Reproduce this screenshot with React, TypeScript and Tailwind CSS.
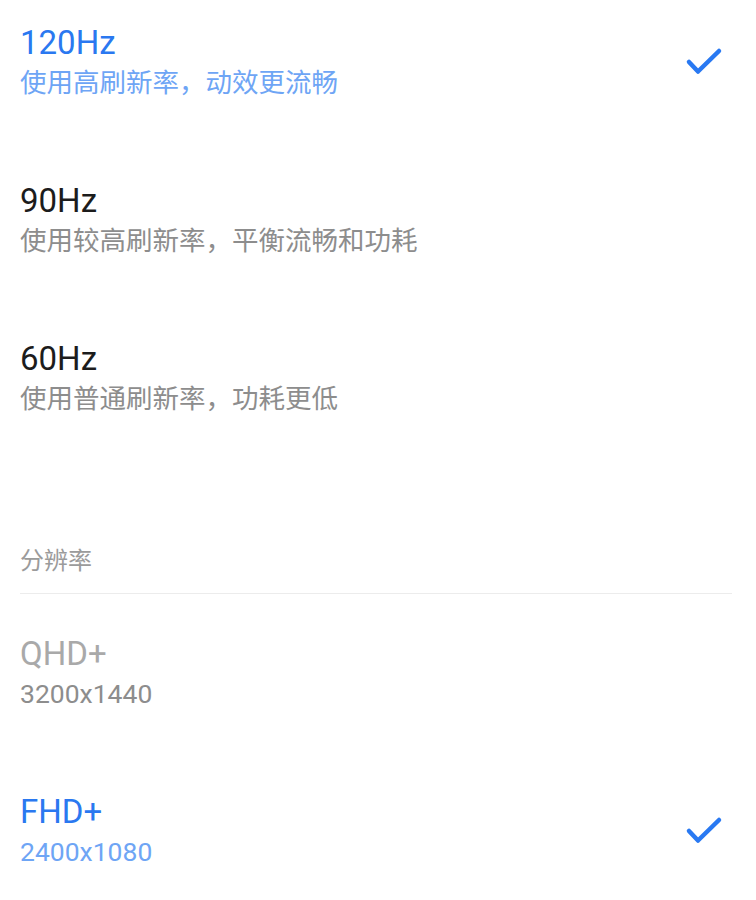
import React from 'react';

type Option = {
  title: string;
  desc: string;
  selected?: boolean;
  disabled?: boolean;
};

const refreshRates: Option[] = [
  { title: '120Hz', desc: '使用高刷新率，动效更流畅', selected: true },
  { title: '90Hz', desc: '使用较高刷新率，平衡流畅和功耗' },
  { title: '60Hz', desc: '使用普通刷新率，功耗更低' },
];

const resolutions: Option[] = [
  { title: 'QHD+', desc: '3200x1440', disabled: true },
  { title: 'FHD+', desc: '2400x1080', selected: true },
];

const CheckMark = () => (
  <svg width="40" height="31" viewBox="0 0 40 31" fill="none">
    <path
      d="M5 16 L14 25.5 L35 5"
      stroke="#2979f2"
      strokeWidth="4.5"
      strokeLinecap="round"
      strokeLinejoin="round"
    />
  </svg>
);

const Row = ({ opt, className }: { opt: Option; className: string }) => {
  const titleColor = opt.selected
    ? 'text-[#2a78f0]'
    : opt.disabled
    ? 'text-[#a9a9a9]'
    : 'text-[#1c1c1c]';
  const descColor = opt.selected ? 'text-[#6ea5f5]' : 'text-[#8d8d8d]';
  return (
    <div className={`flex items-center justify-between pl-5 pr-8 ${className}`}>
      <div>
        <div className={`text-[33px] leading-[40px] ${titleColor}`}>{opt.title}</div>
        <div className={`text-[26.5px] leading-[40px] ${descColor}`}>{opt.desc}</div>
      </div>
      {opt.selected && (
        <div className="-mt-1">
          <CheckMark />
        </div>
      )}
    </div>
  );
};

export default function App() {
  return (
    <div
      className="w-[756px] h-[900px] bg-white overflow-hidden"
      style={{ fontFamily: 'Roboto, "Noto Sans CJK SC", sans-serif' }}
    >
      <Row opt={refreshRates[0]} className="pt-[23px] pb-[39px]" />
      <Row opt={refreshRates[1]} className="pt-[39px] pb-[39px]" />
      <Row opt={refreshRates[2]} className="pt-[39px] pb-[39px]" />

      <div className="mt-[83px] ml-5 mr-6 pb-3 border-b border-[#ececec]">
        <div className="text-[24px] leading-[40px] text-[#9b9b9b]">分辨率</div>
      </div>

      <Row opt={resolutions[0]} className="pt-[40px] pb-[39px]" />
      <Row opt={resolutions[1]} className="pt-[39px] pb-[39px]" />
    </div>
  );
}
